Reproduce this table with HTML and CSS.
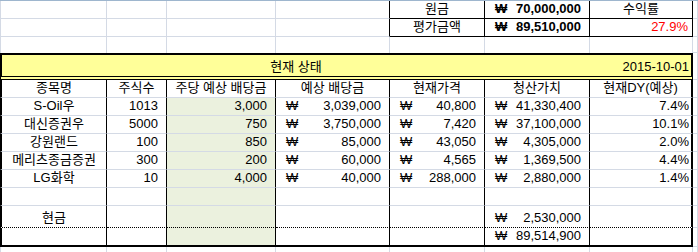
FILE: index.html
```html
<!DOCTYPE html>
<html lang="ko">
<head>
<meta charset="utf-8">
<title>현재 상태</title>
<link rel="stylesheet" href="styles.css">
</head>
<body>
<div class="sheet">
  <!-- row 1 -->
  <div class="c lg"></div><div class="c"></div><div class="c"></div><div class="c bxl"></div>
  <div class="c bx ctr">원금</div>
  <div class="c bx acc bold"><span>₩</span><span>70,000,000</span></div>
  <div class="c bx ctr">수익률</div>
  <div class="c"></div>
  <!-- row 2 -->
  <div class="c lg"></div><div class="c"></div><div class="c"></div><div class="c bxl"></div>
  <div class="c bx ctr">평가금액</div>
  <div class="c bx acc bold"><span>₩</span><span>89,510,000</span></div>
  <div class="c bx right red">27.9%</div>
  <div class="c"></div>
  <!-- row 3 -->
  <div class="c lg nob"></div><div class="c nob"></div><div class="c nob"></div><div class="c nob"></div>
  <div class="c nob"></div><div class="c nob"></div><div class="c nob"></div><div class="c"></div>
  <!-- title row -->
  <div class="c title ctr">현재 상태</div>
  <div class="c title-r pct">2015-10-01</div>
  <div class="c"></div>
  <!-- header -->
  <div class="c t tl ctr">종목명</div>
  <div class="c t ctr">주식수</div>
  <div class="c t ctr">주당 예상 배당금</div>
  <div class="c t ctr">예상 배당금</div>
  <div class="c t ctr">현재가격</div>
  <div class="c t ctr">청산가치</div>
  <div class="c tr ctr">현재DY(예상)</div>
  <div class="c"></div>
  <!-- S-Oil우 -->
  <div class="c t tl ctr">S-Oil우</div>
  <div class="c t num">1013</div>
  <div class="c t g num">3,000</div>
  <div class="c t acc"><span>₩</span><span>3,039,000</span></div>
  <div class="c t acc"><span>₩</span><span>40,800</span></div>
  <div class="c t acc"><span>₩</span><span>41,330,400</span></div>
  <div class="c tr pct">7.4%</div>
  <div class="c"></div>
  <!-- 대신증권우 -->
  <div class="c t tl ctr">대신증권우</div>
  <div class="c t num">5000</div>
  <div class="c t g num">750</div>
  <div class="c t acc"><span>₩</span><span>3,750,000</span></div>
  <div class="c t acc"><span>₩</span><span>7,420</span></div>
  <div class="c t acc"><span>₩</span><span>37,100,000</span></div>
  <div class="c tr pct">10.1%</div>
  <div class="c"></div>
  <!-- 강원랜드 -->
  <div class="c t tl ctr">강원랜드</div>
  <div class="c t num">100</div>
  <div class="c t g num">850</div>
  <div class="c t acc"><span>₩</span><span>85,000</span></div>
  <div class="c t acc"><span>₩</span><span>43,050</span></div>
  <div class="c t acc"><span>₩</span><span>4,305,000</span></div>
  <div class="c tr pct">2.0%</div>
  <div class="c"></div>
  <!-- 메리츠종금증권 -->
  <div class="c t tl ctr">메리츠종금증권</div>
  <div class="c t num">300</div>
  <div class="c t g num">200</div>
  <div class="c t acc"><span>₩</span><span>60,000</span></div>
  <div class="c t acc"><span>₩</span><span>4,565</span></div>
  <div class="c t acc"><span>₩</span><span>1,369,500</span></div>
  <div class="c tr pct">4.4%</div>
  <div class="c"></div>
  <!-- LG화학 -->
  <div class="c t tl ctr">LG화학</div>
  <div class="c t num">10</div>
  <div class="c t g num">4,000</div>
  <div class="c t acc"><span>₩</span><span>40,000</span></div>
  <div class="c t acc"><span>₩</span><span>288,000</span></div>
  <div class="c t acc"><span>₩</span><span>2,880,000</span></div>
  <div class="c tr pct">1.4%</div>
  <div class="c"></div>
  <!-- blank -->
  <div class="c t tl"></div>
  <div class="c t"></div>
  <div class="c t g"></div>
  <div class="c t"></div>
  <div class="c t"></div>
  <div class="c t"></div>
  <div class="c tr"></div>
  <div class="c"></div>
  <!-- 현금 -->
  <div class="c t tl dot ctr">현금</div>
  <div class="c t dot"></div>
  <div class="c t g dot"></div>
  <div class="c t dot"></div>
  <div class="c t dot"></div>
  <div class="c t dot acc"><span>₩</span><span>2,530,000</span></div>
  <div class="c tr dot"></div>
  <div class="c"></div>
  <!-- total -->
  <div class="c t tl bot"></div>
  <div class="c t bot"></div>
  <div class="c t g bot"></div>
  <div class="c t bot"></div>
  <div class="c t bot"></div>
  <div class="c t bot acc"><span>₩</span><span>89,514,900</span></div>
  <div class="c tr bot"></div>
  <div class="c"></div>
  <!-- trailer -->
  <div class="c lg nob"></div><div class="c nob"></div><div class="c nob"></div><div class="c nob"></div>
  <div class="c nob"></div><div class="c nob"></div><div class="c nob"></div><div class="c nob"></div>
</div>
</body>
</html>
```

FILE: styles.css
```css
html, body {
  margin: 0;
  padding: 0;
  background: #ffffff;
}

body {
  width: 698px;
  height: 252px;
  overflow: hidden;
  font-family: "Liberation Sans", "Noto Sans CJK KR", sans-serif;
  font-size: 13px;
  color: #000000;
}

.sheet {
  display: grid;
  grid-template-columns: 107px 60px 109px 114px 95px 105px 103px 5px;
  grid-template-rows: 18px 18px 16px 27px 18px 18px 18px 18px 18px 18px 18px 22px 19px 10px;
  border-top: 1px solid #9eb6ce;
  width: 698px;
}

.c {
  box-sizing: border-box;
  display: flex;
  align-items: flex-end;
  padding: 0 2px 1px 2px;
  line-height: 16px;
  white-space: nowrap;
  border-right: 1px solid #d4dae5;
  border-bottom: 1px solid #d4dae5;
}

.lg { border-left: 1px solid #d4dae5; }
.nob { border-bottom: none; }

/* summary box */
.bxl { border-right-color: #000000; }
.bx {
  border-right-color: #000000;
  border-bottom-color: #000000;
}
.bold { font-weight: 700; }
.red { color: #ff0000; }
.right {
  justify-content: flex-end;
  padding-right: 4px;
}

/* alignment */
.ctr { justify-content: center; }
.num {
  justify-content: flex-end;
  padding-right: 8px;
}
.pct {
  justify-content: flex-end;
  padding-right: 2px;
}
.acc {
  justify-content: space-between;
  padding-left: 10px;
  padding-right: 8px;
}

/* table */
.title {
  grid-column: span 6;
  background: #ffff99;
  border-top: 2px solid #000000;
  border-left: 2px solid #000000;
  border-bottom: 4px double #000000;
  border-right: none;
}
.title-r {
  background: #ffff99;
  border-top: 2px solid #000000;
  border-right: 2px solid #000000;
  border-bottom: 4px double #000000;
}
.t { border-right-color: #000000; }
.tl { border-left: 2px solid #000000; }
.tr { border-right: 2px solid #000000; }
.g { background: #ebf1de; }
.dot { border-bottom: 1px dotted #000000; }
.bot { border-bottom: 2px solid #000000; }
```
